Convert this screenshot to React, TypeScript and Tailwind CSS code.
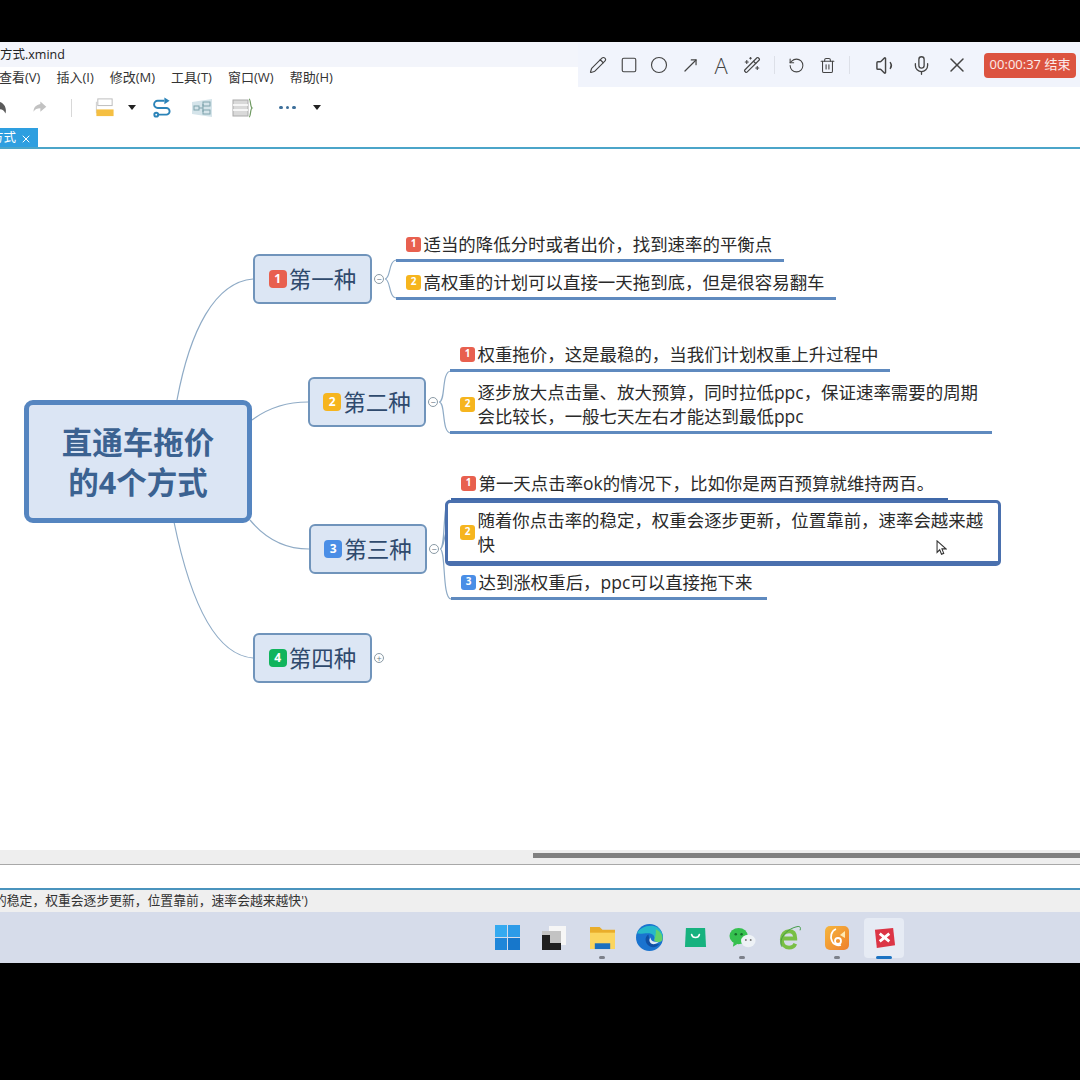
import { Circle, Mic, MoveUpRight, Pencil, RotateCcw, Square, Trash2, Volume1, WandSparkles, X } from "lucide-react";

const badgeColors: Record<number, string> = {
  1: "bg-[#e8604f]",
  2: "bg-[#f6b51e]",
  3: "bg-[#4a8ee6]",
  4: "bg-[#10b45c]",
};

const Badge = ({ n, big }: { n: number; big?: boolean }) => (
  <span
    className={
      (big ? "w-[18px] h-[18px] text-[12px] rounded-[4px] " : "w-[15px] h-[15px] text-[10px] rounded-[3px] ") +
      "shrink-0 flex items-center justify-center text-white font-bold " +
      badgeColors[n]
    }
  >
    {n}
  </span>
);

const Branch = ({ n, label, className }: { n: number; label: string; className: string }) => (
  <div
    className={
      "absolute h-[50px] flex items-center justify-center gap-[2px] rounded-[6px] border-[2.5px] border-[#7094bb] bg-[#dce6f4] text-[22.5px] text-[#2f4a6d] " +
      className
    }
  >
    <Badge n={n} big />
    <span className="pt-px">{label}</span>
  </div>
);

const Leaf = ({ n, lines, className }: { n: number; lines: string[]; className: string }) => (
  <div className={"absolute flex items-center gap-[2.5px] pl-[10px] text-[17.45px] leading-[23.5px] text-[#2a2a2a] " + className}>
    <Badge n={n} />
    <div className="whitespace-nowrap pt-px">
      {lines.map((l) => (
        <div key={l}>{l}</div>
      ))}
    </div>
  </div>
);

const Fold = ({ plus, className }: { plus?: boolean; className: string }) => (
  <span className={"absolute w-[10px] h-[10px] rounded-full border border-[#8a9aa5] bg-white flex items-center justify-center text-[#6b7b88] text-[9px] leading-none " + className}>
    {plus ? "+" : "−"}
  </span>
);

const Caret = () => <span className="w-0 h-0 border-x-[4px] border-x-transparent border-t-[5px] border-t-[#222]" />;

const ToolIcons = () => (
  <div className="h-[41px] bg-white flex items-center -ml-[9px]">
    <div className="flex items-center gap-[23px]">
      <svg viewBox="0 0 20 20" className="w-[17px] h-[17px]" fill="#5a5a5a">
        <path d="M9 3l-7 6 7 6v-3c4 0 6 1 8 5 2-7-2-13-8-14z" />
      </svg>
      <svg viewBox="0 0 20 20" className="w-[17px] h-[17px]" fill="#c2c2c2">
        <path d="M11 3l7 6-7 6v-4c-4 0-6 1-8 4 0-5 3-8 8-9z" />
      </svg>
      <span className="w-px h-[18px] bg-[#d8d8d8]" />
    </div>
    <div className="flex items-center gap-[13px] ml-[22px]">
      <svg viewBox="0 0 22 22" className="w-[21px] h-[21px]">
        <rect x="4" y="2" width="15" height="7" fill="#fff" stroke="#bbb" />
        <path d="M2.5 5v12" stroke="#ccc" />
        <rect x="2.5" y="13" width="18" height="7" fill="#f5bf42" />
      </svg>
      <Caret />
    </div>
    <div className="flex items-center gap-[19px] ml-[15px]">
      <svg viewBox="0 0 22 22" className="w-[21px] h-[21px]" fill="none" stroke="#2b83b8" strokeWidth="2">
        <path d="M14 4H7a3.5 3.5 0 0 0 0 7.5h9a3.5 3.5 0 0 1 0 7H8" />
        <path d="M14 0.5l5.5 3.5-5.5 3.5z" fill="#2b83b8" stroke="none" />
        <circle cx="5.5" cy="18.5" r="2" />
      </svg>
      <svg viewBox="0 0 22 22" className="w-[22px] h-[22px]" fill="none" stroke="#7fa3ac">
        <path d="M1 5l20-3v18L1 17z" fill="#d5e4ea" stroke="none" />
        <rect x="3" y="9" width="5" height="4" />
        <rect x="12" y="5" width="7" height="4" />
        <rect x="12" y="13" width="7" height="4" />
        <path d="M8 11h4M12 7v8" />
      </svg>
      <svg viewBox="0 0 22 22" className="w-[22px] h-[22px]" fill="none">
        <rect x="1" y="3" width="15" height="16" fill="#d9d9d9" stroke="#aaa" />
        <path d="M1 8h15M1 13h15" stroke="#fff" strokeWidth="1.5" />
        <path d="M17 2c2 0 1 8 3 9-2 1-1 9-3 9" stroke="#6f9a62" strokeWidth="1.2" />
      </svg>
    </div>
    <div className="flex items-center gap-[17px] ml-[25px]">
      <span className="flex gap-[3px]">
        <span className="w-[3.5px] h-[3.5px] rounded-full bg-[#3d6f9a]" />
        <span className="w-[3.5px] h-[3.5px] rounded-full bg-[#3d6f9a]" />
        <span className="w-[3.5px] h-[3.5px] rounded-full bg-[#3d6f9a]" />
      </span>
      <Caret />
    </div>
  </div>
);

const MindMap = () => (
  <div className="relative h-[701px] bg-white overflow-hidden">
    <svg viewBox="0 149 1080 701" className="absolute inset-0 w-[1080px] h-[701px]" fill="none" stroke="#8fabc6" strokeWidth="1.2">
      <path d="M177 400C190 330 215 282 253 279" />
      <path d="M252 420C268 408 285 402 308 402" />
      <path d="M250 520C265 538 285 549 309 549" />
      <path d="M174 522C190 600 215 655 253 658" />
      <path d="M385 279C391 279 388 260 397 260M385 279C391 279 388 298 397 298" />
      <path d="M439 402C446 402 441 371 451 371M439 402C446 402 441 433 451 433" />
      <path d="M440 549C446 549 442 500 450 500M440 549C444 549 444 535 447 530M440 549C446 549 442 599 451 599" />
    </svg>

    <div className="absolute left-[24px] top-[251px] w-[228px] h-[123px] rounded-[9px] border-[5px] border-[#5585c0] bg-[#dbe5f4] flex items-center justify-center text-center text-[30.5px] leading-[40px] font-bold text-[#3b6291]">
      <div>
        直通车拖价
        <br />
        的4个方式
      </div>
    </div>

    <Branch n={1} label="第一种" className="left-[253px] top-[105px] w-[119px]" />
    <Branch n={2} label="第二种" className="left-[308px] top-[228px] w-[118px]" />
    <Branch n={3} label="第三种" className="left-[309px] top-[375px] w-[118px]" />
    <Branch n={4} label="第四种" className="left-[253px] top-[484px] w-[119px]" />

    <Fold className="left-[374px] top-[125px]" />
    <Fold className="left-[428px] top-[248px]" />
    <Fold className="left-[429px] top-[395px]" />
    <Fold plus className="left-[374px] top-[504px]" />

    <Leaf n={1} lines={["适当的降低分时或者出价，找到速率的平衡点"]} className="left-[396px] top-[80px] w-[388px] h-[33px] border-b-[3px] border-[#5f8abf]" />
    <Leaf n={2} lines={["高权重的计划可以直接一天拖到底，但是很容易翻车"]} className="left-[396px] top-[118px] w-[440px] h-[33px] border-b-[3px] border-[#5f8abf]" />
    <Leaf n={1} lines={["权重拖价，这是最稳的，当我们计划权重上升过程中"]} className="left-[450px] top-[190px] w-[440px] h-[33px] border-b-[3px] border-[#5f8abf]" />
    <Leaf
      n={2}
      lines={["逐步放大点击量、放大预算，同时拉低ppc，保证速率需要的周期", "会比较长，一般七天左右才能达到最低ppc"]}
      className="left-[450px] top-[228px] w-[542px] h-[57px] border-b-[3px] border-[#5f8abf]"
    />
    <Leaf n={1} lines={["第一天点击率ok的情况下，比如你是两百预算就维持两百。"]} className="left-[451px] top-[319px] w-[497px] h-[33px] border-b-[3px] border-[#3f68a8]" />
    <Leaf
      n={2}
      lines={["随着你点击率的稳定，权重会逐步更新，位置靠前，速率会越来越", "快"]}
      className="left-[445px] top-[351px] w-[556px] h-[66px] rounded-[5px] border-[3px] border-b-[5px] border-[#4a70ae] bg-white pl-[12px]"
    />
    <Leaf n={3} lines={["达到涨权重后，ppc可以直接拖下来"]} className="left-[451px] top-[418px] w-[316px] h-[33px] border-b-[3px] border-[#5f8abf]" />

    <svg viewBox="0 0 12 18" className="absolute left-[936px] top-[391px] w-[11px] h-[16px]" fill="#fff" stroke="#333" strokeWidth="1.2">
      <path d="M1 1v13l3-3 2 5 2.5-1-2-5h4.5z" />
    </svg>
  </div>
);

const Dot = () => <span className="absolute left-1/2 -translate-x-1/2 bottom-[4px] w-[6px] h-[3px] rounded-full bg-[#7c808a]" />;

const Taskbar = () => (
  <div className="h-[51px] bg-[#d6dcea] flex items-center pl-[484px]">
    <div className="w-[47px] flex justify-center">
      <div className="w-[25px] h-[25px] grid grid-cols-2 gap-px">
        <span className="bg-[#35aaf0]" />
        <span className="bg-[#2d9be8]" />
        <span className="bg-[#1f86d9]" />
        <span className="bg-[#1777cb]" />
      </div>
    </div>
    <div className="w-[46px] flex justify-center">
      <svg viewBox="0 0 26 26" className="w-[26px] h-[26px]">
        <rect x="8" y="1" width="17" height="19" fill="#f6f6f6" />
        <rect x="1" y="6" width="19" height="19" fill="#c3c3c3" />
        <path d="M1 10h8v8h11v7H1z" fill="#1f1f1f" />
      </svg>
    </div>
    <div className="w-[50px] h-[51px] flex items-center justify-center relative">
      <svg viewBox="0 0 28 26" className="w-[27px] h-[25px]">
        <path d="M1 2h10l3 3h13v20H1z" fill="#e9ad2b" />
        <path d="M1 8h26v17H1z" fill="#fbd55f" />
        <path d="M6 25v-6h16v6z" fill="#1b6fbe" />
      </svg>
      <Dot />
    </div>
    <div className="w-[45px] flex justify-center">
      <svg viewBox="0 0 26 26" className="w-[27px] h-[27px]">
        <circle cx="13" cy="13" r="13" fill="#1a73cf" />
        <path d="M1 9C4 1 22-3 25.5 10c.8 4-1.500 7-5 7-2 0-3-1-3-2 1-3-1-6-6-6-4 0-8 1-10.500 0z" fill="#26b8c9" />
        <path d="M19 5c5 2 7 7 6.500 10-1 3-5 3.500-8 1 1-3 2-7 1.500-11z" fill="#62d26a" />
        <path d="M12 10c-4 2-4 9 2 12 3 1 6 0 9-3-5 1.500-10 0-11-9z" fill="#0f4fa3" />
        <path d="M14 13c0 3 3 5 8 4-2 2-5 3-7 2-2-1-3-4-1-6z" fill="#dfe9f4" />
      </svg>
    </div>
    <div className="w-[47px] flex justify-center">
      <svg viewBox="0 0 24 24" className="w-[23px] h-[23px]">
        <path d="M2 2h20l1 20H1z" fill="#17b27f" />
        <path d="M8 9c1 4 7 4 8 0" fill="none" stroke="#fff" strokeWidth="1.8" strokeLinecap="round" />
      </svg>
    </div>
    <div className="w-[46px] h-[51px] flex items-center justify-center relative">
      <svg viewBox="0 0 28 24" className="w-[27px] h-[24px]">
        <ellipse cx="10" cy="10" rx="9.5" ry="8.5" fill="#35c04f" />
        <path d="M5 16l-1 5 5-3z" fill="#35c04f" />
        <circle cx="7" cy="8" r="1.3" fill="#146c2a" />
        <circle cx="13" cy="8" r="1.3" fill="#146c2a" />
        <ellipse cx="20" cy="15" rx="7.5" ry="6.5" fill="#eef2f6" />
        <circle cx="17.5" cy="14" r="1" fill="#777" />
        <circle cx="22.5" cy="14" r="1" fill="#777" />
      </svg>
      <Dot />
    </div>
    <div className="w-[49px] flex justify-center">
      <svg viewBox="0 0 26 26" className="w-[25px] h-[26px]" fill="none">
        <path d="M7 13.5h12c0-5-2.500-7.500-6.500-7.500S5 9 5 14.500 8.500 23 12.500 23c3 0 5.500-1.500 6.500-4" stroke="#79bf45" strokeWidth="4" />
        <path d="M5 22C1 14 10 3 22 1c2 0 3 1 2 4" stroke="#3f9a45" strokeWidth="1" />
      </svg>
    </div>
    <div className="w-[46px] h-[51px] flex items-center justify-center relative">
      <div className="w-[24px] h-[24px] rounded-[5px] bg-linear-to-br from-[#f5b63d] to-[#ee7f2c] flex items-end justify-center overflow-hidden">
        <svg viewBox="0 0 24 24" className="w-[24px] h-[24px]" fill="none" stroke="#fff" strokeWidth="1.8">
          <path d="M11 3C6 5 5 11 7 15c1 3 5 5 9 4" />
          <circle cx="13" cy="15" r="3" />
          <path d="M15 9l5-4v7z" fill="#fde9b4" stroke="none" />
        </svg>
      </div>
      <Dot />
    </div>
    <div className="w-[40px] h-[40px] ml-[4px] rounded-[4px] bg-[#e6ebf4] flex items-center justify-center relative">
      <svg viewBox="0 0 24 24" className="w-[23px] h-[23px]">
        <path d="M2 4l19-2 2 18-19 3z" fill="#dc3545" />
        <path d="M7 8l10 8M17 8L7 16" stroke="#fff" strokeWidth="3" />
      </svg>
      <span className="absolute left-1/2 -translate-x-1/2 bottom-[-1px] w-[16px] h-[3px] rounded-full bg-[#1b73c2]" />
    </div>
  </div>
);

const RecorderBar = () => (
  <div className="absolute left-[578px] top-[43px] w-[502px] h-[44px] bg-[#f1f4fc] flex items-center gap-[13px] pl-[11px] pr-[4px] text-[#444]">
    <div className="flex items-center gap-[12.5px]">
      <Pencil className="w-[18px] h-[18px]" strokeWidth={1.5} />
      <Square className="w-[18px] h-[18px]" strokeWidth={1.5} />
      <Circle className="w-[18px] h-[18px]" strokeWidth={1.5} />
      <MoveUpRight className="w-[19px] h-[19px]" strokeWidth={1.5} />
      <span className="w-[18px] text-center text-[22px] leading-[26px] font-light">A</span>
      <WandSparkles className="w-[18px] h-[18px]" strokeWidth={1.5} />
    </div>
    <span className="w-px h-[18px] bg-[#dde0e8]" />
    <div className="flex items-center gap-[14px]">
      <RotateCcw className="w-[17px] h-[17px]" strokeWidth={1.5} />
      <Trash2 className="w-[17px] h-[17px]" strokeWidth={1.5} />
    </div>
    <span className="w-px h-[18px] bg-[#dde0e8]" />
    <div className="flex items-center gap-[13px] pl-[12px]">
      <Volume1 className="w-[23px] h-[23px]" strokeWidth={1.5} />
      <Mic className="w-[21px] h-[21px]" strokeWidth={1.5} />
      <X className="w-[24px] h-[24px]" strokeWidth={1.5} />
    </div>
    <div className="ml-auto shrink-0 w-[92px] h-[25px] rounded-[4px] bg-[#dc5340] text-white/90 text-[13px] flex items-center justify-center whitespace-nowrap">00:00:37 结束</div>
  </div>
);

export default function App() {
  return (
    <div className="w-[1080px] h-[1080px] bg-black pt-[42px] overflow-hidden relative font-['Open_Sans','Noto_Sans_CJK_SC',sans-serif]">
      <div className="h-[25px] pt-[2px] bg-[#f3f5fb] text-[12.5px] text-[#222] flex items-center">方式.xmind</div>
      <div className="h-[20px] pt-px bg-white flex items-center gap-[16px] -ml-px text-[13px] text-[#333]">
        <span>查看(V)</span>
        <span>插入(I)</span>
        <span>修改(M)</span>
        <span>工具(T)</span>
        <span>窗口(W)</span>
        <span>帮助(H)</span>
      </div>
      <ToolIcons />
      <div className="h-[19px] bg-white flex">
        <div className="w-[38px] pt-[2px] bg-[#2e9fe0] text-white text-[12.5px] flex items-center justify-end gap-[4px] pr-[6px] overflow-hidden whitespace-nowrap">
          <span>方式</span>
          <X className="w-[12px] h-[12px] shrink-0" />
        </div>
      </div>
      <div className="h-[2px] bg-[#4ba5c9]" />
      <MindMap />
      <div className="h-[15px] bg-[#eeeeee] border-b border-[#a8a8a8] pl-[533px] pt-[3px]">
        <div className="h-[5px] bg-[#808080]" />
      </div>
      <div className="h-[23px] bg-white" />
      <div className="h-[2px] bg-[#4a93bd]" />
      <div className="h-[22px] bg-[#efefef] flex items-center text-[12.8px] text-[#333] -ml-[6px] whitespace-nowrap">的稳定，权重会逐步更新，位置靠前，速率会越来越快')</div>
      <Taskbar />
      <RecorderBar />
    </div>
  );
}
